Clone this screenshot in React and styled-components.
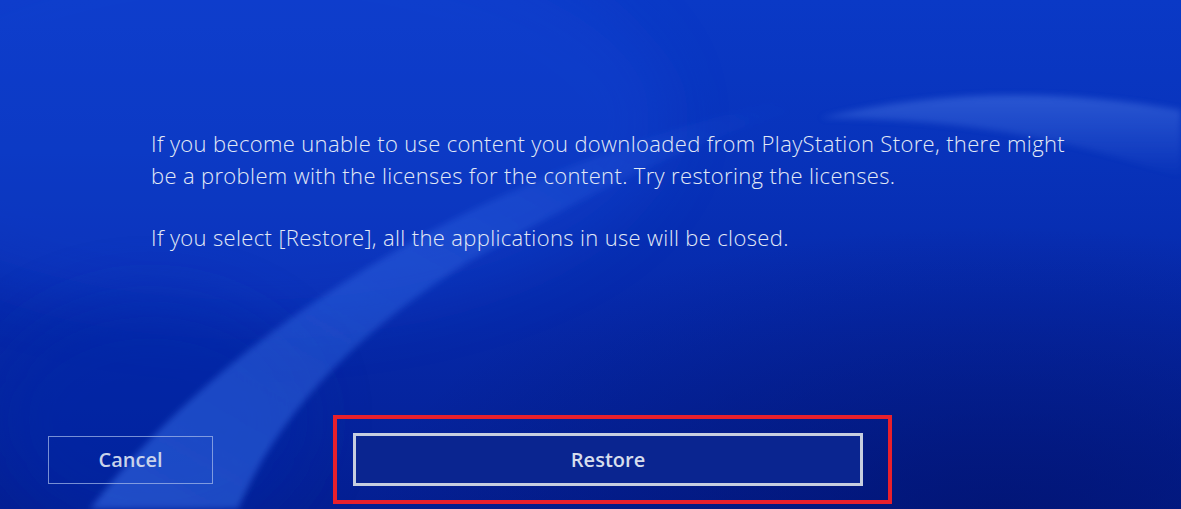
import React from "react";
import styled, { createGlobalStyle } from "styled-components";

const Global = createGlobalStyle`
  html, body { margin: 0; padding: 0; background: #0624a0; }
  body { font-family: "Open Sans", "Noto Sans", sans-serif; }
  * { box-sizing: border-box; }
`;

const Screen = styled.div`
  position: relative;
  width: 1181px;
  height: 509px;
  overflow: hidden;
  display: flex;
  flex-direction: column;
  justify-content: space-between;
  background:
    radial-gradient(ellipse 900px 420px at 1000px 520px, rgba(1, 18, 110, 0.75), rgba(1, 18, 110, 0) 70%),
    linear-gradient(180deg, #0a39c6 0%, #0833bb 30%, #0629aa 60%, #041f92 100%);
`;

const Waves = styled.svg`
  position: absolute;
  inset: 0;
  width: 100%;
  height: 100%;
  pointer-events: none;
`;

const Content = styled.div`
  position: relative;
  padding: 127px 0 0 151px;
  color: #e2e9f6;
  font-size: 22px;
  font-weight: 300;
  line-height: 32px;
  letter-spacing: 0.35px;
`;

const Paragraph = styled.p`
  margin: 0 0 30px;
  white-space: nowrap;
`;

const Footer = styled.div`
  position: relative;
  display: flex;
  align-items: center;
  padding: 0 0 5px 48px;
  gap: 120px;
`;

const Button = styled.div`
  display: flex;
  align-items: center;
  justify-content: center;
  width: ${(p) => p.$w}px;
  height: ${(p) => p.$h}px;
  border: ${(p) => (p.$focused ? "3px solid #c6cee0" : "1.5px solid rgba(170, 190, 235, 0.7)")};
  background: ${(p) => (p.$focused ? "#0a2590" : "transparent")};
  color: ${(p) => (p.$focused ? "#d6ddec" : "#c9d3ea")};
  font-size: 20px;
  font-weight: 600;
`;

const Highlight = styled.div`
  border: 4px solid #e8202c;
  padding: 14px 25px 14px 16px;
`;

export default function App() {
  return (
    <>
      <Global />
      <Screen>
        <Waves viewBox="0 0 1181 509" preserveAspectRatio="none">
          <defs>
            <filter id="soft" x="-20%" y="-20%" width="140%" height="140%">
              <feGaussianBlur stdDeviation="3" />
            </filter>
            <filter id="wide" x="-30%" y="-30%" width="160%" height="160%">
              <feGaussianBlur stdDeviation="30" />
            </filter>
            <linearGradient id="band" x1="0" y1="1" x2="1" y2="0">
              <stop offset="0" stopColor="#3d78f2" stopOpacity="0.5" />
              <stop offset="0.55" stopColor="#3d78f2" stopOpacity="0.32" />
              <stop offset="1" stopColor="#3d78f2" stopOpacity="0" />
            </linearGradient>
            <linearGradient id="wave" x1="0" y1="0" x2="0" y2="1">
              <stop offset="0" stopColor="#7aa6ff" stopOpacity="0.3" />
              <stop offset="1" stopColor="#7aa6ff" stopOpacity="0" />
            </linearGradient>
            <linearGradient id="waveFade" x1="0" y1="0" x2="1" y2="0">
              <stop offset="0" stopColor="#fff" stopOpacity="0" />
              <stop offset="0.4" stopColor="#fff" stopOpacity="1" />
              <stop offset="1" stopColor="#fff" stopOpacity="1" />
            </linearGradient>
            <mask id="waveMask">
              <rect x="0" y="0" width="1181" height="509" fill="url(#waveFade)" />
            </mask>
          </defs>
          <ellipse cx="250" cy="120" rx="420" ry="200" fill="#1246d8" opacity="0.35" filter="url(#wide)" />
          <ellipse cx="150" cy="420" rx="160" ry="120" fill="#0328a8" opacity="0.5" filter="url(#wide)" />
          <path
            d="M90 509 C 175 400, 295 300, 462 215 C 565 165, 660 130, 780 100 L 790 112 C 670 150, 570 205, 468 262 C 360 330, 280 410, 238 509 Z"
            fill="url(#band)"
            filter="url(#soft)"
          />
          <path
            d="M820 118 C 940 88, 1070 90, 1181 110 L 1181 178 C 1080 140, 960 118, 820 118 Z"
            fill="url(#wave)"
            mask="url(#waveMask)"
            filter="url(#soft)"
          />
        </Waves>
        <Content>
          <Paragraph>
            If you become unable to use content you downloaded from PlayStation Store, there might
            <br />
            be a problem with the licenses for the content. Try restoring the licenses.
          </Paragraph>
          <Paragraph>If you select [Restore], all the applications in use will be closed.</Paragraph>
        </Content>
        <Footer>
          <Button $w={165} $h={48}>Cancel</Button>
          <Highlight>
            <Button $w={510} $h={53} $focused>Restore</Button>
          </Highlight>
        </Footer>
      </Screen>
    </>
  );
}
